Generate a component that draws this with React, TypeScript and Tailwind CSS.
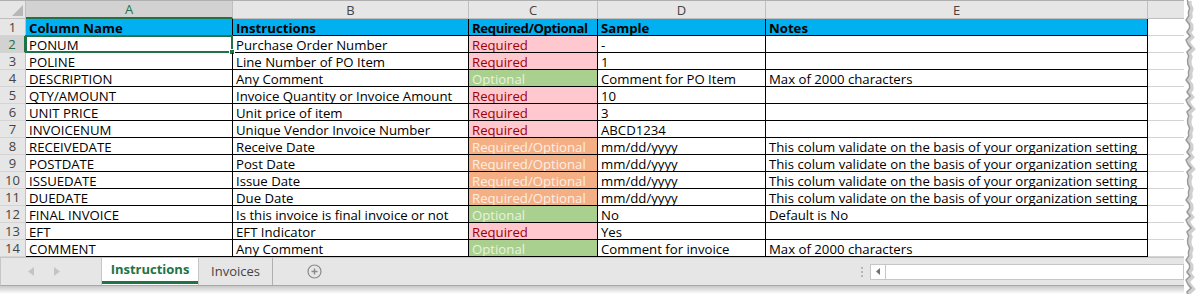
import React from "react";

type Kind = "R" | "O" | "RO";

const rows: [string, string, Kind, string, string][] = [
  ["PONUM", "Purchase Order Number", "R", "-", ""],
  ["POLINE", "Line Number of PO Item", "R", "1", ""],
  ["DESCRIPTION", "Any Comment", "O", "Comment for PO Item", "Max of 2000 characters"],
  ["QTY/AMOUNT", "Invoice Quantity or Invoice Amount", "R", "10", ""],
  ["UNIT PRICE", "Unit price of item", "R", "3", ""],
  ["INVOICENUM", "Unique Vendor Invoice Number", "R", "ABCD1234", ""],
  ["RECEIVEDATE", "Receive Date", "RO", "mm/dd/yyyy", "This colum validate on the basis of your organization setting"],
  ["POSTDATE", "Post Date", "RO", "mm/dd/yyyy", "This colum validate on the basis of your organization setting"],
  ["ISSUEDATE", "Issue Date", "RO", "mm/dd/yyyy", "This colum validate on the basis of your organization setting"],
  ["DUEDATE", "Due Date", "RO", "mm/dd/yyyy", "This colum validate on the basis of your organization setting"],
  ["FINAL INVOICE", "Is this invoice is final invoice or not", "O", "No", "Default is No"],
  ["EFT", "EFT Indicator", "R", "Yes", ""],
  ["COMMENT", "Any Comment", "O", "Comment for invoice", "Max of 2000 characters"],
];

const kindStyle: Record<Kind, { label: string; cls: string }> = {
  R: { label: "Required", cls: "bg-[#ffc7ce] text-[#9c0006]" },
  O: { label: "Optional", cls: "bg-[#a9d08e] text-[#e8f3e0]" },
  RO: { label: "Required/Optional", cls: "bg-[#f4b084] text-[#fdeee4]" },
};

const cell = "h-[17px] leading-[16px] pt-[1px] px-[3px] text-[13.2px] whitespace-nowrap overflow-hidden border-r border-b border-black shrink-0";

function RowNum({ n, active }: { n: number; active?: boolean }) {
  return (
    <div
      className={
        "w-[26px] h-[17px] shrink-0 text-center leading-[17px] border-b border-[#d4d4d4] " +
        (active
          ? "bg-[#d2d2d2] text-[#217346] border-r-2 border-r-[#217346]"
          : "bg-[#e6e6e6] text-[#444] border-r border-r-[#bfbfbf]")
      }
    >
      {n}
    </div>
  );
}

function TornEdge() {
  const pts: string[] = [];
  for (let i = 0; i <= 74; i++) {
    const y = i * 4;
    const x = 2 + ((i * 7) % 5) * 0.9 + (i % 3 === 0 ? 1.5 : 0);
    pts.push(`${x.toFixed(1)},${y}`);
  }
  return (
    <svg width="13" height="294" className="shrink-0">
      <polyline points={pts.join(" ")} fill="none" stroke="#d0d0d0" strokeWidth="4" transform="translate(2,1)" />
      <polyline points={pts.join(" ")} fill="none" stroke="#9a9a9a" strokeWidth="1.4" />
    </svg>
  );
}

export default function App() {
  return (
    <div className="flex w-[1197px] h-[294px] bg-white text-[13px] text-black overflow-hidden" style={{ fontFamily: '"Open Sans", "Liberation Sans", Arial, sans-serif' }}>
      <div className="w-[1184px] shrink-0 flex flex-col">
        {/* column letters */}
        <div className="flex h-[19px] border-t border-[#b0b0b0] text-[#444]">
          <div className="w-[26px] shrink-0 bg-[#e6e6e6] border-r border-b border-[#bfbfbf] flex items-end justify-end p-[2px]">
            <svg width="11" height="11">
              <polygon points="11,0 11,11 0,11" fill="#b7b7b7" />
            </svg>
          </div>
          <div className="w-[207px] shrink-0 bg-[#d2d2d2] text-[#217346] text-center leading-[17px] border-r border-[#bfbfbf] border-b-2 border-b-[#217346]">A</div>
          <div className="w-[236px] shrink-0 bg-[#e6e6e6] text-center leading-[18px] border-r border-b border-[#bfbfbf]">B</div>
          <div className="w-[129px] shrink-0 bg-[#e6e6e6] text-center leading-[18px] border-r border-b border-[#bfbfbf]">C</div>
          <div className="w-[168px] shrink-0 bg-[#e6e6e6] text-center leading-[18px] border-r border-b border-[#bfbfbf]">D</div>
          <div className="w-[382px] shrink-0 bg-[#e6e6e6] text-center leading-[18px] border-r border-b border-[#bfbfbf]">E</div>
          <div className="flex-1 bg-[#e6e6e6] border-b border-[#bfbfbf]" />
        </div>

        {/* header row */}
        <div className="flex">
          <RowNum n={1} />
          <div className={cell + " w-[207px] bg-[#00b0f0] font-bold"}>Column Name</div>
          <div className={cell + " w-[236px] bg-[#00b0f0] font-bold"}>Instructions</div>
          <div className={cell + " w-[129px] bg-[#00b0f0] font-bold tracking-[-0.4px]"}>Required/Optional</div>
          <div className={cell + " w-[168px] bg-[#00b0f0] font-bold"}>Sample</div>
          <div className={cell + " w-[382px] bg-[#00b0f0] font-bold"}>Notes</div>
          <div className="flex-1 h-[17px] border-b border-[#d4d4d4]" />
        </div>

        {rows.map((r, i) => {
          const k = kindStyle[r[2]];
          const active = i === 0;
          return (
            <div key={i} className="flex">
              <RowNum n={i + 2} active={active} />
              <div className={cell + " w-[207px] relative overflow-visible"}>
                {r[0]}
                {active && (
                  <>
                    <div className="absolute inset-[-1px] border-2 border-[#217346]" />
                    <div className="absolute right-[-3px] bottom-[-3px] w-[6px] h-[6px] bg-[#217346] border border-white" />
                  </>
                )}
              </div>
              <div className={cell + " w-[236px]"}>{r[1]}</div>
              <div className={cell + " w-[129px] " + k.cls}>{k.label}</div>
              <div className={cell + " w-[168px]"}>{r[3]}</div>
              <div className={cell + " w-[382px]"}>{r[4]}</div>
              <div className="flex-1 h-[17px] border-b border-[#d4d4d4]" />
            </div>
          );
        })}

        {/* sheet tabs */}
        <div className="flex items-stretch h-[29px] bg-[#e6e6e6] border-t border-[#c6c6c6] border-b border-b-[#a8a8a8] border-l border-l-[#c6c6c6]">
          <div className="w-[100px] shrink-0 flex items-center gap-[20px] pl-[27px] text-[#bdbdbd]">
            <svg width="6" height="9"><polygon points="6,0 6,9 0,4.5" fill="#c4c4c4" /></svg>
            <svg width="6" height="9"><polygon points="0,0 0,9 6,4.5" fill="#c4c4c4" /></svg>
          </div>
          <div className="w-[98px] shrink-0 bg-white border-x border-[#c6c6c6] flex flex-col">
            <div className="flex-1 flex items-center justify-center font-bold text-[#217346]">Instructions</div>
            <div className="h-[3px] bg-[#217346] mb-[1px]" />
          </div>
          <div className="w-[74px] shrink-0 border-r border-[#b0b0b0] flex items-center justify-center text-[#444]">Invoices</div>
          <div className="w-[82px] shrink-0 flex items-center justify-center">
            <svg width="15" height="15" viewBox="0 0 15 15">
              <circle cx="7.5" cy="7.5" r="6.5" fill="none" stroke="#8a8a8a" strokeWidth="1.2" />
              <path d="M7.5 4.5v6M4.5 7.5h6" stroke="#8a8a8a" strokeWidth="1.4" />
            </svg>
          </div>
          <div className="flex-1" />
          <div className="w-[16px] flex flex-col items-center justify-center gap-[2px]">
            <div className="w-[2px] h-[2px] bg-[#b5b5b5]" />
            <div className="w-[2px] h-[2px] bg-[#b5b5b5]" />
            <div className="w-[2px] h-[2px] bg-[#b5b5b5]" />
          </div>
          <div className="w-[314px] shrink-0 flex items-center">
            <div className="w-full h-[16px] bg-white border border-[#c6c6c6] flex">
              <div className="w-[15px] border-r border-[#c6c6c6] flex items-center justify-center">
                <svg width="4" height="7"><polygon points="4,0 4,7 0,3.5" fill="#707070" /></svg>
              </div>
            </div>
          </div>
        </div>
        <div className="h-[8px] bg-gradient-to-b from-[#c8c8c8] to-white" />
      </div>
      <TornEdge />
    </div>
  );
}
